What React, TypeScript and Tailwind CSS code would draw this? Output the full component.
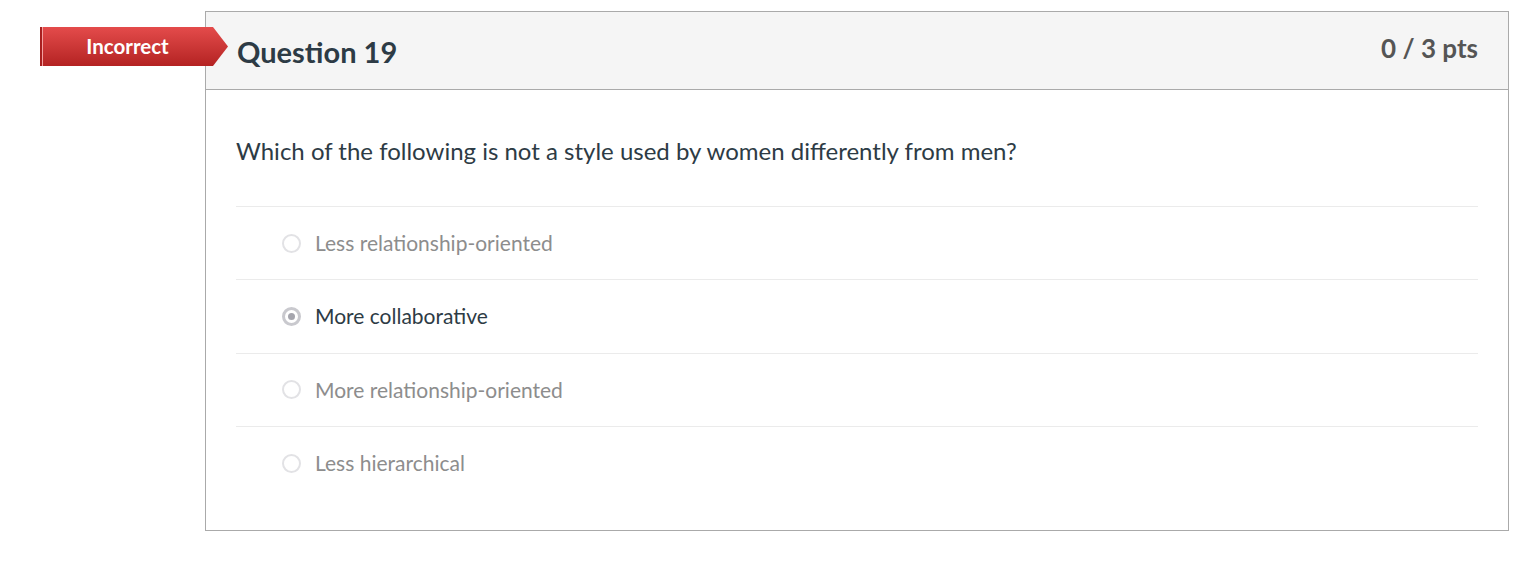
import React from "react";

const answers = [
  { text: "Less relationship-oriented", selected: false },
  { text: "More collaborative", selected: true },
  { text: "More relationship-oriented", selected: false },
  { text: "Less hierarchical", selected: false },
];

function Radio({ selected }: { selected: boolean }) {
  if (selected) {
    return (
      <span className="flex h-[19px] w-[19px] items-center justify-center rounded-full border-[3px] border-[#c9c9ce] bg-white">
        <span className="h-[7px] w-[7px] rounded-full bg-[#a5a5ad]" />
      </span>
    );
  }
  return <span className="block h-[19px] w-[19px] rounded-full border-[2px] border-[#e2e2e5] bg-white" />;
}

export default function App() {
  return (
    <div className="relative min-h-[565px] w-full bg-white pl-[205px] pt-[11px]" style={{ fontFamily: "Lato, 'Open Sans', sans-serif" }}>
      <div
        className="absolute left-[40px] top-[27px] flex h-[39px] w-[188px] items-center bg-gradient-to-b from-[#e44b4b] to-[#b42222]"
        style={{ clipPath: "polygon(0 0, calc(100% - 15px) 0, 100% 50%, calc(100% - 15px) 100%, 0 100%)" }}
      >
        <span className="absolute left-0 top-0 h-full w-[2px] bg-[#a81f1f]" />
        <span className="absolute left-[2px] top-0 h-full w-[1px] bg-[#f3a0a0]" />
        <span className="w-[175px] pb-[1px] text-center text-[20.5px] font-bold text-white">Incorrect</span>
      </div>
      <div className="w-[1304px] border border-[#aaaaaa]">
        <div className="flex h-[78px] items-start justify-between border-b border-[#aaaaaa] bg-[#f5f5f5] pl-[31px] pr-[30px]">
          <h2 className="pt-[22px] text-[29px] font-bold leading-[36px] text-[#2d3b45]">Question 19</h2>
          <span className="pt-[21px] text-[26px] font-bold leading-[30px] text-[#555555]">0 / 3 pts</span>
        </div>
        <div className="px-[30px] pb-[31px] pt-[45px]">
          <p className="text-[24px] leading-[32px] text-[#2d3b45]">
            Which of the following is not a style used by women differently from men?
          </p>
          <div className="mt-[39px]">
            {answers.map((a) => (
              <div key={a.text} className="flex h-[73.3px] items-center border-t border-[#ebebeb] pl-[46px]">
                <Radio selected={a.selected} />
                <span className={`ml-[14px] text-[21px] leading-[28px] ${a.selected ? "text-[#2d3b45]" : "text-[#8d8d8d]"}`}>
                  {a.text}
                </span>
              </div>
            ))}
          </div>
        </div>
      </div>
    </div>
  );
}
